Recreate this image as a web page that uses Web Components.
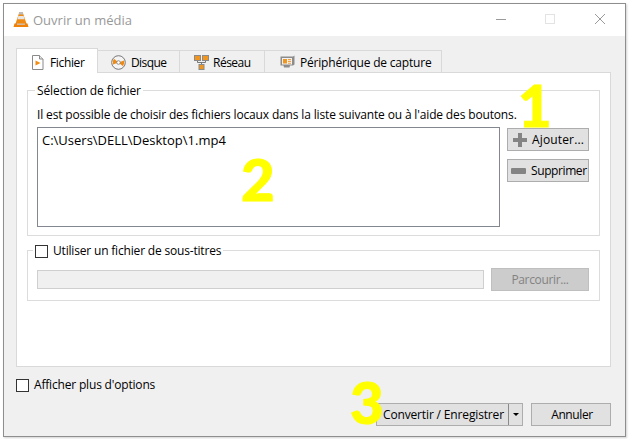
<!DOCTYPE html>
<html lang="fr">
<head>
<meta charset="utf-8">
<title>Ouvrir un média</title>
<style>
  html, body { margin: 0; height: 100%; background: #fff; }
  body { font: 12px "Open Sans", "Noto Sans", sans-serif; color: #000; overflow: hidden; }
</style>
</head>
<body>
<vlc-window>
  <vlc-tabs>
    <vlc-tab active label="Fichier" width="82" icon="file" pad="14" gap="6" track="-.35"></vlc-tab>
    <vlc-tab label="Disque" width="82" icon="disc" pad="13" gap="5" track="-.6"></vlc-tab>
    <vlc-tab label="Réseau" width="85" icon="net" pad="14" gap="4" track="-.5"></vlc-tab>
    <vlc-tab label="Périphérique de capture" width="177" icon="card" pad="15" gap="5" track="-.2"></vlc-tab>
  </vlc-tabs>
  <vlc-panel>
    <vlc-group title="Sélection de fichier" style="height:146px">
      <file-picker></file-picker>
    </vlc-group>
    <vlc-group checkable title="Utiliser un fichier de sous-titres" style="height:51px;margin-top:14px">
      <subs-row></subs-row>
    </vlc-group>
  </vlc-panel>
  <dialog-footer></dialog-footer>
  <big-mark style="left:514px;top:78px">1</big-mark>
  <big-mark style="left:237px;top:152px">2</big-mark>
  <big-mark style="left:346px;top:375px">3</big-mark>
</vlc-window>

<script>
(() => {
  const ICONS = {
    cone: `<svg width="16" height="18" viewBox="0 0 16 18">
      <path d="M6.4 1h3.2l4 12H2.400z" fill="#f08a10"/>
      <path d="M5.400 5h5.200l1 3.200H4.400z" fill="#e6e6e6"/>
      <path d="M6.400 1h3.200l.8 2.400H5.600z" fill="#bdbdbd"/>
      <path d="M1.500 12.500h13l1 3.500H.5z" fill="#ef8207"/>
      <path d="M4 12.500h8v1.300H4z" fill="#c9c9c9"/>
    </svg>`,
    file: `<svg width="13" height="15" viewBox="0 0 13 15">
      <path d="M1.500.5h7l3.500 3.500v10.500H1.500z" fill="#fff" stroke="#8a8a8a"/>
      <path d="M8.500.5v3.500H12" fill="#e5e5e5" stroke="#8a8a8a"/>
      <path d="M4.500 5.500l5 2.500-5 2.500z" fill="#f28c12"/>
    </svg>`,
    disc: `<svg width="15" height="15" viewBox="0 0 15 15">
      <circle cx="7.500" cy="7.500" r="6.800" fill="#f4f4f4" stroke="#777"/>
      <path d="M7.500 7.500L3 3.800A6 6 0 0 0 2 9.500zM7.500 7.500l4.500 3.700A6 6 0 0 0 13 5.500z" fill="#f08a10"/>
      <circle cx="7.500" cy="7.500" r="1.800" fill="#fff" stroke="#777" stroke-width=".8"/>
    </svg>`,
    net: `<svg width="15" height="15" viewBox="0 0 15 15">
      <path d="M3.500 5v2.500h8V5M7.500 7.500V10" fill="none" stroke="#777"/>
      <rect x="0.500" y="0.500" width="6" height="5" fill="#f0961e" stroke="#8a8a8a"/>
      <rect x="8.500" y="0.500" width="6" height="5" fill="#f0961e" stroke="#8a8a8a"/>
      <rect x="5" y="9.500" width="5" height="5" fill="#f0961e" stroke="#8a8a8a"/>
    </svg>`,
    card: `<svg width="15" height="14" viewBox="0 0 15 14">
      <path d="M.5 1.500h12.500l1.500-1v9l-1.500 1h-3l-.5 2H4l-.5-2H.5z" fill="#8c8c8c"/>
      <rect x="2" y="3" width="10" height="6.500" fill="#f3f3f3"/>
      <rect x="3" y="4" width="4" height="4.500" fill="#f0961e"/>
      <path d="M8 4h3v1.200H8zM8 6h3v1H8zM8 7.800h3V8.800H8z" fill="#f0a040"/>
    </svg>`,
    plus: `<svg width="14" height="14" viewBox="0 0 14 14"><path d="M5 0h4v5h5v4H9v5H5V9H0V5h5z" fill="#848484"/></svg>`,
    minus: `<svg width="15" height="6" viewBox="0 0 15 6"><rect width="15" height="6" rx="1" fill="#848484"/></svg>`,
  };

  // small helper so every element below stays a few lines
  const shadow = (el, html) => {
    el.attachShadow({ mode: 'open' }).innerHTML = html;
    return el.shadowRoot;
  };

  class VlcWindow extends HTMLElement {
    constructor() {
      super();
      shadow(this, `
        <style>
          :host {
            display: flex;
            flex-direction: column;
            box-sizing: border-box;
            position: relative;
            width: 623px;
            height: 434px;
            margin: 3px 0 0 3px;
            background: #f0f0f0;
            border: 1px solid #8e8e8e;
            box-shadow: 1px 1px 2px rgba(0,0,0,.18);
          }
          .bar {
            display: flex;
            align-items: center;
            height: 32px;
            flex: none;
            background: #fff;
            padding-left: 9px;
            color: #999;
            font-size: 13px;
          }
          .bar span { margin-left: 4px; flex: 1; }
          .ctl { display: flex; }
          .ctl svg { display: block; width: 50px; height: 32px; }
          .body {
            flex: 1;
            display: flex;
            flex-direction: column;
            padding: 12px 14px 13px 12px;
            min-height: 0;
          }
        </style>
        <div class="bar">
          ${ICONS.cone}
          <span>Ouvrir un média</span>
          <div class="ctl">
            <svg viewBox="0 0 50 32"><path d="M21 15.500h10" stroke="#9a9a9a"/></svg>
            <svg viewBox="0 0 50 32"><rect x="20.500" y="10.500" width="9" height="9" fill="none" stroke="#e3e3e3"/></svg>
            <svg viewBox="0 0 50 32"><path d="M20 10l10 10M30 10L20 20" stroke="#9a9a9a" fill="none"/></svg>
          </div>
        </div>
        <div class="body"><slot></slot></div>
      `);
    }
  }

  class VlcTabs extends HTMLElement {
    constructor() {
      super();
      shadow(this, `
        <style>
          :host { display: flex; align-items: flex-end; height: 25px; flex: none; position: relative; z-index: 1; margin-bottom: -1px; }
        </style>
        <slot></slot>
      `);
    }
  }

  class VlcTab extends HTMLElement {
    constructor() {
      super();
      const active = this.hasAttribute('active');
      shadow(this, `
        <style>
          :host {
            display: flex;
            align-items: center;
            gap: ${this.getAttribute('gap')}px;
            box-sizing: border-box;
            width: ${this.getAttribute('width')}px;
            height: ${active ? 25 : 23}px;
            padding-left: ${this.getAttribute('pad')}px;
            padding-top: ${active ? 2 : 1}px;
            letter-spacing: ${this.getAttribute('track')}px;
            background: ${active ? '#fff' : '#f0f0f0'};
            border: 1px solid #d9d9d9;
            border-left-width: ${active ? 1 : 0}px;
            ${active ? 'border-bottom: 0;' : ''}
          }
          svg { display: block; }
        </style>
        ${ICONS[this.getAttribute('icon')]}<span>${this.getAttribute('label')}</span>
      `);
    }
  }

  class VlcPanel extends HTMLElement {
    constructor() {
      super();
      shadow(this, `
        <style>
          :host {
            display: block;
            box-sizing: border-box;
            height: 295px;
            flex: none;
            background: #fff;
            border: 1px solid #d9d9d9;
            padding: 17px 10px 0 10px;
          }
        </style>
        <slot></slot>
      `);
    }
  }

  class VlcCheck extends HTMLElement {
    constructor() {
      super();
      shadow(this, `
        <style>
          :host { display: inline-flex; align-items: center; gap: 5px; line-height: 16px; letter-spacing: -.18px; }
          i { display: block; width: 13px; height: 13px; box-sizing: border-box; border: 1px solid #333; background: #fff; }
        </style>
        <i></i><span><slot></slot></span>
      `);
    }
  }

  class VlcGroup extends HTMLElement {
    constructor() {
      super();
      const title = this.getAttribute('title');
      const checkable = this.hasAttribute('checkable');
      const head = checkable ? `<vlc-check>${title}</vlc-check>` : title;
      shadow(this, `
        <style>
          :host {
            display: block;
            box-sizing: border-box;
            border: 1px solid #dcdcdc;
            padding: 0 10px 0 9px;
          }
          .head {
            width: fit-content;
            height: 16px;
            line-height: 16px;
            margin: -8px 0 0 ${checkable ? -4 : -2}px;
            padding: 0 2px;
            background: #fff;
            letter-spacing: -.1px;
          }
        </style>
        <div class="head">${head}</div>
        <slot></slot>
      `);
    }
  }

  class VlcButton extends HTMLElement {
    constructor() {
      super();
      shadow(this, `
        <style>
          :host {
            display: flex;
            align-items: center;
            justify-content: center;
            gap: 5px;
            box-sizing: border-box;
            height: 23px;
            background: #e1e1e1;
            border: 1px solid #adadad;
          }
          :host([disabled]) { background: #cccccc; border-color: #bfbfbf; color: #838383; letter-spacing: -.35px; }
        </style>
        <slot></slot>
      `);
    }
  }

  class FilePicker extends HTMLElement {
    constructor() {
      super();
      shadow(this, `
        <style>
          :host { display: block; }
          p { margin: 6px 0 0; height: 20px; line-height: 20px; white-space: nowrap; letter-spacing: -.15px; }
          .row { display: flex; gap: 7px; margin-top: 2px; }
          .list {
            box-sizing: border-box;
            width: 463px;
            height: 100px;
            border: 1px solid #828790;
            background: #fff;
            padding: 3px 4px;
            font-size: 13px;
            line-height: 18px;
          }
          .side { display: flex; flex-direction: column; gap: 8px; width: 82px; margin-top: 1px; }
          .side vlc-button { justify-content: flex-start; }
          .add { padding-left: 5px; letter-spacing: .15px; }
          .del { padding-left: 3px; letter-spacing: -.4px; }
          svg { display: block; flex: none; }
        </style>
        <p>Il est possible de choisir des fichiers locaux dans la liste suivante ou à l'aide des boutons.</p>
        <div class="row">
          <div class="list">C:\\Users\\DELL\\Desktop\\1.mp4</div>
          <div class="side">
            <vlc-button class="add">${ICONS.plus}<span>Ajouter...</span></vlc-button>
            <vlc-button class="del">${ICONS.minus}<span>Supprimer</span></vlc-button>
          </div>
        </div>
      `);
    }
  }

  class SubsRow extends HTMLElement {
    constructor() {
      super();
      shadow(this, `
        <style>
          :host { display: flex; align-items: center; gap: 7px; margin-top: 9px; }
          .input { box-sizing: border-box; width: 447px; height: 19px; background: #f0f0f0; border: 1px solid #cfcfcf; }
          vlc-button { width: 98px; }
        </style>
        <div class="input"></div>
        <vlc-button disabled>Parcourir...</vlc-button>
      `);
    }
  }

  class DialogFooter extends HTMLElement {
    constructor() {
      super();
      shadow(this, `
        <style>
          :host { display: block; flex: none; padding-top: 10px; }
          .actions { display: flex; justify-content: flex-end; gap: 8px; margin-top: 7px; letter-spacing: -.15px; }
          .split { width: 147px; justify-content: flex-start; padding: 0 0 0 6px; gap: 0; }
          .split b { flex: 1; font-weight: 400; white-space: nowrap; }
          .split i { display: flex; align-items: center; justify-content: center; width: 13px; height: 21px; border-left: 1px solid #8a8a8a; }
          .split i::after { content: ""; border: 3px solid transparent; border-top: 3px solid #000; border-bottom: 0; }
          .cancel { width: 80px; letter-spacing: -.4px; padding-left: 2px; }
        </style>
        <vlc-check>Afficher plus d'options</vlc-check>
        <div class="actions">
          <vlc-button class="split"><b>Convertir / Enregistrer</b><i></i></vlc-button>
          <vlc-button class="cancel">Annuler</vlc-button>
        </div>
      `);
    }
  }

  class BigMark extends HTMLElement {
    constructor() {
      super();
      shadow(this, `
        <style>
          :host {
            position: absolute;
            z-index: 2;
            font: 900 58px/.8 Lato, "Liberation Sans", sans-serif;
            color: #ffff00;
            -webkit-text-stroke: 1px #ffff00;
          }
        </style>
        <slot></slot>
      `);
    }
  }

  customElements.define('vlc-window', VlcWindow);
  customElements.define('vlc-tabs', VlcTabs);
  customElements.define('vlc-tab', VlcTab);
  customElements.define('vlc-panel', VlcPanel);
  customElements.define('vlc-check', VlcCheck);
  customElements.define('vlc-group', VlcGroup);
  customElements.define('vlc-button', VlcButton);
  customElements.define('file-picker', FilePicker);
  customElements.define('subs-row', SubsRow);
  customElements.define('dialog-footer', DialogFooter);
  customElements.define('big-mark', BigMark);
})();
</script>
</body>
</html>
